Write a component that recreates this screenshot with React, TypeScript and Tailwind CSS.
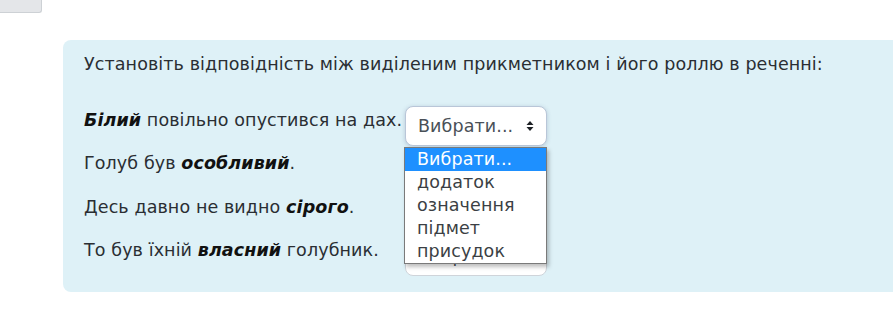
import React from "react";

const options = ["Вибрати...", "додаток", "означення", "підмет", "присудок"];

const rows = [
  { before: "", bold: "Білий", after: " повільно опустився на дах." },
  { before: "Голуб був ", bold: "особливий", after: "." },
  { before: "Десь давно не видно ", bold: "сірого", after: "." },
  { before: "То був їхній ", bold: "власний", after: " голубник." },
];

function Caret() {
  return (
    <svg width="8" height="12" viewBox="0 0 8 12" className="text-[#1d2125]">
      <path d="M4 1 L7.5 5 H0.5 Z" fill="currentColor" />
      <path d="M4 11 L7.5 7 H0.5 Z" fill="currentColor" />
    </svg>
  );
}

function FakeSelect({ open }: { open?: boolean }) {
  return (
    <div className="relative mt-[3px]">
      <div
        className={`flex h-[40px] w-[142px] items-center justify-between rounded-[8px] border bg-white pl-[12px] pr-[12px] text-[#495057] ${
          open ? "border-[#b9c6d8] shadow-[0_1px_4px_rgba(60,80,120,0.25)]" : "border-[#cfd4da]"
        }`}
      >
        <span>Вибрати...</span>
        <Caret />
      </div>
      {open && (
        <div className="absolute left-[-1px] top-[41px] z-10 w-[143px] border border-[#7a7a7a] bg-white shadow-[2px_3px_4px_rgba(0,0,0,0.25)]">
          {options.map((o, i) => (
            <div
              key={o}
              className={`h-[23px] pl-[12px] leading-[23px] ${
                i === 0 ? "bg-[#1e90ff] text-white" : "text-[#3b3f44]"
              }`}
            >
              {o}
            </div>
          ))}
        </div>
      )}
    </div>
  );
}

export default function App() {
  return (
    <div className="relative h-[311px] w-[893px] overflow-hidden bg-white font-['DejaVu_Sans',sans-serif] text-[17.5px] tracking-[0.1px] text-[#2a2e33]">
      <div className="absolute left-0 top-0 h-[13px] w-[42px] rounded-br-[3px] border-b border-r border-[#cdd1d5] bg-[#e4e6e9]" />
      <div className="pt-[40px] pl-[63px]">
        <div className="h-[252px] rounded-l-[8px] bg-[#def1f7] pl-[21px] pt-[12px]">
          <p className="leading-[25px]">
            Установіть відповідність між виділеним прикметником і його роллю в реченні:
          </p>
          <div className="mt-[26px] grid grid-cols-[321px_142px]">
            {rows.map((r, i) => (
              <React.Fragment key={i}>
                <div className="h-[43.3px] whitespace-nowrap pt-[5px] leading-[25px]">
                  {r.before}
                  <b className="font-bold italic text-[#111]">{r.bold}</b>
                  {r.after}
                </div>
                <FakeSelect open={i === 0} />
              </React.Fragment>
            ))}
          </div>
        </div>
      </div>
    </div>
  );
}
